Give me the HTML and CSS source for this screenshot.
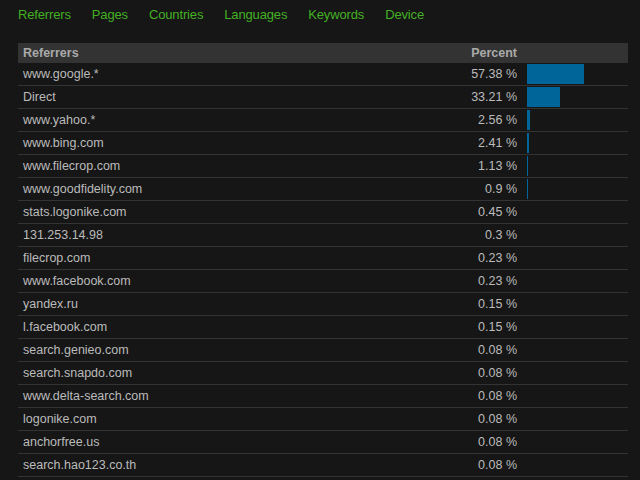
FILE: index.html
```html
<!DOCTYPE html>
<html>
<head>
<meta charset="utf-8">
<link rel="stylesheet" href="styles.css">
</head>
<body>
<nav class="tabs">
  <a>Referrers</a><a>Pages</a><a>Countries</a><a>Languages</a><a>Keywords</a><a>Device</a>
</nav>
<div class="table">
  <div class="row head"><div class="name">Referrers</div><div class="pct">Percent</div><div class="barcell"></div></div>
  <div class="row"><div class="name">www.google.*</div><div class="pct">57.38 %</div><div class="barcell"><div class="bar" style="width:57px"></div></div></div>
  <div class="row"><div class="name">Direct</div><div class="pct">33.21 %</div><div class="barcell"><div class="bar" style="width:33px"></div></div></div>
  <div class="row"><div class="name">www.yahoo.*</div><div class="pct">2.56 %</div><div class="barcell"><div class="bar" style="width:3px"></div></div></div>
  <div class="row"><div class="name">www.bing.com</div><div class="pct">2.41 %</div><div class="barcell"><div class="bar" style="width:2px"></div></div></div>
  <div class="row"><div class="name">www.filecrop.com</div><div class="pct">1.13 %</div><div class="barcell"><div class="bar" style="width:1px"></div></div></div>
  <div class="row"><div class="name">www.goodfidelity.com</div><div class="pct">0.9 %</div><div class="barcell"><div class="bar" style="width:1px"></div></div></div>
  <div class="row"><div class="name">stats.logonike.com</div><div class="pct">0.45 %</div><div class="barcell"></div></div>
  <div class="row"><div class="name">131.253.14.98</div><div class="pct">0.3 %</div><div class="barcell"></div></div>
  <div class="row"><div class="name">filecrop.com</div><div class="pct">0.23 %</div><div class="barcell"></div></div>
  <div class="row"><div class="name">www.facebook.com</div><div class="pct">0.23 %</div><div class="barcell"></div></div>
  <div class="row"><div class="name">yandex.ru</div><div class="pct">0.15 %</div><div class="barcell"></div></div>
  <div class="row"><div class="name">l.facebook.com</div><div class="pct">0.15 %</div><div class="barcell"></div></div>
  <div class="row"><div class="name">search.genieo.com</div><div class="pct">0.08 %</div><div class="barcell"></div></div>
  <div class="row"><div class="name">search.snapdo.com</div><div class="pct">0.08 %</div><div class="barcell"></div></div>
  <div class="row"><div class="name">www.delta-search.com</div><div class="pct">0.08 %</div><div class="barcell"></div></div>
  <div class="row"><div class="name">logonike.com</div><div class="pct">0.08 %</div><div class="barcell"></div></div>
  <div class="row"><div class="name">anchorfree.us</div><div class="pct">0.08 %</div><div class="barcell"></div></div>
  <div class="row"><div class="name">search.hao123.co.th</div><div class="pct">0.08 %</div><div class="barcell"></div></div>
</div>
</body>
</html>
```
FILE: styles.css
```css
html, body {
  margin: 0;
  padding: 0;
  background: #161616;
  font-family: "Liberation Sans", Arial, sans-serif;
}
.tabs {
  display: flex;
  gap: 21px;
  padding: 3px 0 0 18px;
  height: 22px;
  align-items: center;
}
.tabs a {
  color: #44b024;
  font-size: 13px;
  letter-spacing: -0.15px;
}
.table {
  margin: 18px 12px 0 18px;
  width: 610px;
}
.row {
  display: grid;
  grid-template-columns: 1fr 100px 101px;
  height: 22px;
  border-bottom: 1px solid #333;
  font-size: 12.5px;
  color: #bbb;
  align-items: center;
}
.row.head {
  height: 20px;
  background: #333;
  border-bottom: 0;
  font-weight: bold;
  color: #aaa;
}
.name {
  padding-left: 5px;
}
.pct {
  text-align: right;
  padding-right: 10px;
}
.barcell {
  height: 100%;
  display: flex;
  align-items: flex-start;
}
.bar {
  height: 20px;
  margin-top: 1px;
  background: #006699;
}
```
